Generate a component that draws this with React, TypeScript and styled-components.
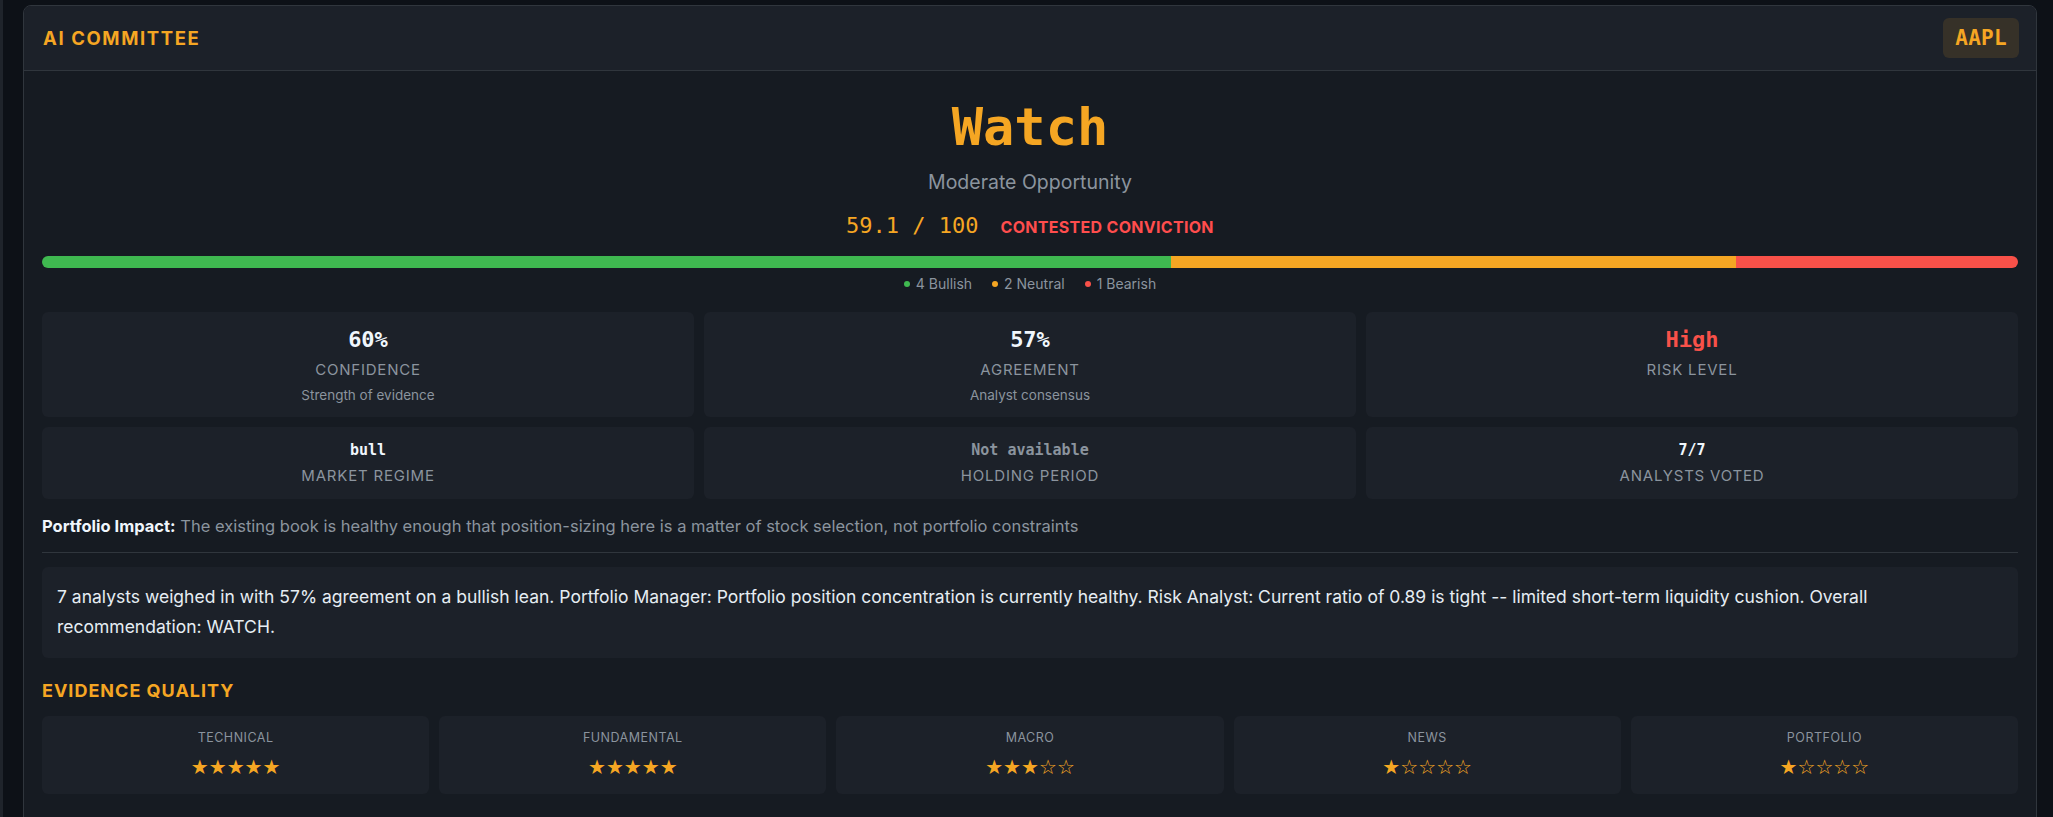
import styled, { createGlobalStyle } from "styled-components";

const GlobalStyle = createGlobalStyle`
  * {
    box-sizing: border-box;
  }
  body {
    margin: 0;
    background-color: #0d1117;
    font-family: Inter, "Noto Sans", sans-serif;
    color: #e6edf3;
  }
`;

const Page = styled.div`
  min-height: 100vh;
  padding: 5px 16px 0px 20px;
  border-left: 3px solid #1f242b;
`;

const Panel = styled.section`
  background-color: #161b22;
  border: solid 1px #30363d;
  border-radius: 8px;
  overflow: hidden;
`;

const Header = styled.header`
  display: flex;
  justify-content: space-between;
  align-items: center;
  height: 65px;
  padding: 0px 17px 0px 19px;
  background-color: #1c2129;
  border-bottom: solid 1px #30363d;
`;

const Title = styled.h2`
  margin: 0px;
  font-size: 18.5px;
  font-weight: 700;
  letter-spacing: 1.6px;
  color: #f5a623;
`;

const Ticker = styled.span`
  display: flex;
  align-items: center;
  height: 40px;
  padding: 0px 12px;
  border-radius: 6px;
  background-color: rgba(245, 166, 35, 0.12);
  font-family: "DejaVu Sans Mono", "Liberation Mono", monospace;
  font-size: 21px;
  font-weight: 700;
  letter-spacing: 0.3px;
  color: #f5a623;
`;

const Body = styled.div`
  padding: 0px 18px 40px 18px;
`;

const Verdict = styled.div`
  display: flex;
  flex-direction: column;
  align-items: center;
  padding: 25px 0px 0px 0px;
`;

const Action = styled.div`
  font-family: "DejaVu Sans Mono", "Liberation Mono", monospace;
  font-size: 52px;
  font-weight: 700;
  line-height: 1.2;
  color: #f5a623;
`;

const Rating = styled.div`
  margin: 11px 0px 0px 0px;
  font-size: 19.5px;
  line-height: 27px;
  color: #8b949e;
`;

const ScoreRow = styled.div`
  display: flex;
  align-items: baseline;
  gap: 22px;
  margin: 13px 0px 0px 0px;
  line-height: 33px;
`;

const Score = styled.span`
  font-family: "DejaVu Sans Mono", "Liberation Mono", monospace;
  font-size: 22px;
  color: #f5a623;
`;

const Conviction = styled.span`
  font-size: 16px;
  font-weight: 700;
  letter-spacing: 0.3px;
  color: #ff4d4d;
`;

const VoteBar = styled.div`
  display: flex;
  height: 12px;
  margin: 12px 0px 0px 0px;
  border-radius: 6px;
  overflow: hidden;
`;

const VoteSegment = styled.div<{ $color: string }>`
  height: 100%;
  background-color: ${(props) => props.$color};
`;

const Legend = styled.div`
  display: flex;
  justify-content: center;
  gap: 20px;
  margin: 7px 0px 0px 0px;
  font-size: 14px;
  line-height: 18px;
  color: #8b949e;
`;

const LegendItem = styled.span`
  display: flex;
  align-items: center;
  gap: 6px;
`;

const Dot = styled.span<{ $color: string }>`
  width: 6px;
  height: 6px;
  border-radius: 50%;
  background-color: ${(props) => props.$color};
`;

const MetricGrid = styled.div`
  display: grid;
  grid-template-columns: repeat(3, 1fr);
  gap: 10px;
  margin: 19px 0px 0px 0px;
`;

const MetricCard = styled.div`
  display: flex;
  flex-direction: column;
  align-items: center;
  padding: 13px 16px 13px 16px;
  border-radius: 6px;
  background-color: #1c2129;
`;

const MetricValue = styled.div<{ $color: string; $small?: boolean }>`
  font-family: "DejaVu Sans Mono", "Liberation Mono", monospace;
  font-size: ${(props) => (props.$small ? "15px" : "22px")};
  line-height: ${(props) => (props.$small ? "20px" : "29px")};
  font-weight: 700;
  color: ${(props) => props.$color};
`;

const MetricLabel = styled.div`
  margin: 6px 0px 0px 0px;
  font-size: 15px;
  line-height: 20px;
  letter-spacing: 0.8px;
  color: #8b949e;
`;

const MetricSub = styled.div`
  margin: 6px 0px 0px 0px;
  font-size: 13.5px;
  line-height: 18px;
  color: #8b949e;
`;

const Impact = styled.p`
  margin: 16px 0px 0px 0px;
  font-size: 16.5px;
  line-height: 22px;
  color: #8b949e;
`;

const ImpactLabel = styled.strong`
  font-weight: 700;
  color: #f0f6fc;
`;

const Divider = styled.hr`
  margin: 15px 0px 0px 0px;
  border: none;
  border-top: solid 1px #30363d;
`;

const Summary = styled.p`
  margin: 14px 0px 0px 0px;
  padding: 15px 16px 16px 15px;
  border-radius: 6px;
  background-color: #1c2129;
  font-size: 17.5px;
  line-height: 30px;
  color: #e6edf3;
`;

const SectionTitle = styled.h3`
  margin: 21px 0px 0px 0px;
  font-size: 18px;
  line-height: 24px;
  font-weight: 700;
  letter-spacing: 1px;
  color: #f5a623;
`;

const EvidenceGrid = styled.div`
  display: grid;
  grid-template-columns: repeat(5, 1fr);
  gap: 10px;
  margin: 13px 0px 0px 0px;
`;

const EvidenceCard = styled.div`
  display: flex;
  flex-direction: column;
  align-items: center;
  padding: 14px 12px 14px 12px;
  border-radius: 6px;
  background-color: #1c2129;
`;

const EvidenceLabel = styled.div`
  font-size: 12.5px;
  line-height: 16px;
  letter-spacing: 0.5px;
  color: #8b949e;
`;

const Stars = styled.div`
  margin: 8px 0px 0px 0px;
  font-family: "DejaVu Sans", sans-serif;
  font-size: 20px;
  line-height: 26px;
  color: #f5a623;
`;

const votes = [
  { label: "Bullish", count: 4, color: "#3fb950" },
  { label: "Neutral", count: 2, color: "#f5a623" },
  { label: "Bearish", count: 1, color: "#f85149" },
];

const metrics = [
  { value: "60%", label: "CONFIDENCE", sub: "Strength of evidence", color: "#f0f6fc" },
  { value: "57%", label: "AGREEMENT", sub: "Analyst consensus", color: "#f0f6fc" },
  { value: "High", label: "RISK LEVEL", color: "#f85149" },
  { value: "bull", label: "MARKET REGIME", color: "#f0f6fc", small: true },
  { value: "Not available", label: "HOLDING PERIOD", color: "#8b949e", small: true },
  { value: "7/7", label: "ANALYSTS VOTED", color: "#f0f6fc", small: true },
];

const evidence = [
  { label: "TECHNICAL", stars: 5 },
  { label: "FUNDAMENTAL", stars: 5 },
  { label: "MACRO", stars: 3 },
  { label: "NEWS", stars: 1 },
  { label: "PORTFOLIO", stars: 1 },
];

const totalVotes = votes.reduce((sum, v) => sum + v.count, 0);

export default function App() {
  return (
    <>
      <GlobalStyle />
      <Page>
        <Panel>
          <Header>
            <Title>AI COMMITTEE</Title>
            <Ticker>AAPL</Ticker>
          </Header>
          <Body>
            <Verdict>
              <Action>Watch</Action>
              <Rating>Moderate Opportunity</Rating>
              <ScoreRow>
                <Score>59.1 / 100</Score>
                <Conviction>CONTESTED CONVICTION</Conviction>
              </ScoreRow>
            </Verdict>
            <VoteBar>
              {votes.map((v) => (
                <VoteSegment
                  key={v.label}
                  $color={v.color}
                  style={{ width: `${(v.count / totalVotes) * 100}%` }}
                />
              ))}
            </VoteBar>
            <Legend>
              {votes.map((v) => (
                <LegendItem key={v.label}>
                  <Dot $color={v.color} />
                  {v.count} {v.label}
                </LegendItem>
              ))}
            </Legend>
            <MetricGrid>
              {metrics.map((m) => (
                <MetricCard key={m.label}>
                  <MetricValue $color={m.color} $small={m.small}>
                    {m.value}
                  </MetricValue>
                  <MetricLabel>{m.label}</MetricLabel>
                  {m.sub && <MetricSub>{m.sub}</MetricSub>}
                </MetricCard>
              ))}
            </MetricGrid>
            <Impact>
              <ImpactLabel>Portfolio Impact:</ImpactLabel> The existing book is
              healthy enough that position-sizing here is a matter of stock
              selection, not portfolio constraints
            </Impact>
            <Divider />
            <Summary>
              7 analysts weighed in with 57% agreement on a bullish lean.
              Portfolio Manager: Portfolio position concentration is currently
              healthy. Risk Analyst: Current ratio of 0.89 is tight -- limited
              short-term liquidity cushion. Overall recommendation: WATCH.
            </Summary>
            <SectionTitle>EVIDENCE QUALITY</SectionTitle>
            <EvidenceGrid>
              {evidence.map((e) => (
                <EvidenceCard key={e.label}>
                  <EvidenceLabel>{e.label}</EvidenceLabel>
                  <Stars>
                    {"★".repeat(e.stars)}
                    {"☆".repeat(5 - e.stars)}
                  </Stars>
                </EvidenceCard>
              ))}
            </EvidenceGrid>
          </Body>
        </Panel>
      </Page>
    </>
  );
}
